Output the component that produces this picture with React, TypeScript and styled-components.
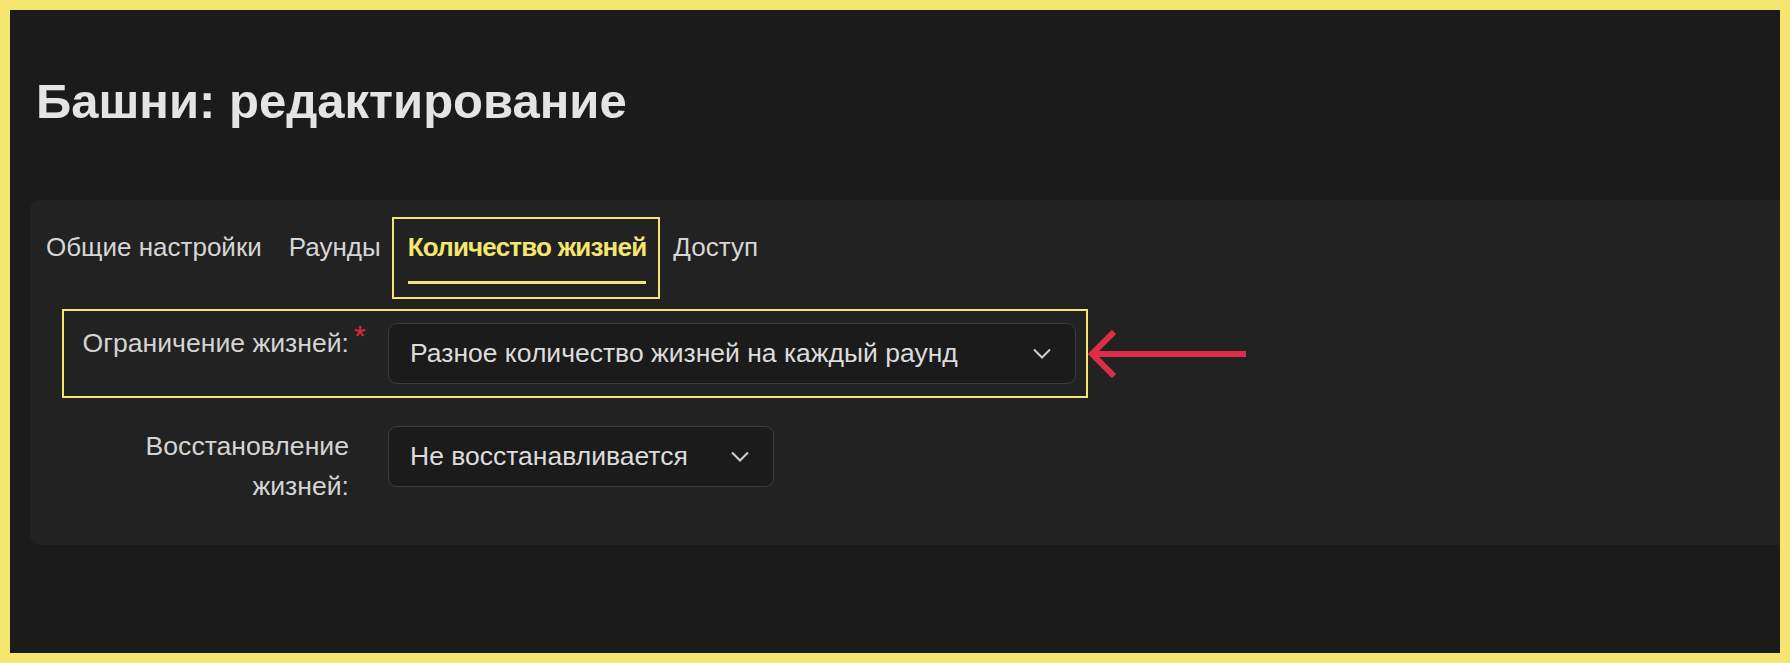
import React from "react";
import styled, { createGlobalStyle } from "styled-components";

const YELLOW = "#f4e66e";

const GlobalStyle = createGlobalStyle`
  * { box-sizing: border-box; }
  body {
    margin: 0;
    font-family: "Liberation Sans", Arial, sans-serif;
    background: #1b1b1b;
  }
`;

const Frame = styled.div`
  height: 100vh;
  border: 10px solid ${YELLOW};
  background: #1b1b1b;
  padding: 63px 0 0 20px;
  overflow: hidden;
`;

const Title = styled.h1`
  margin: 0 0 0 6px;
  font-size: 49px;
  line-height: 56px;
  font-weight: 700;
  color: #e4e4e4;
`;

const Card = styled.section`
  margin-top: 71px;
  background: #222222;
  border-radius: 9px 0 0 9px;
  padding: 29px 16px 25px 16px;
`;

const TabList = styled.div`
  display: flex;
  gap: 27px;
`;

const Tab = styled.div<{ $active?: boolean }>`
  position: relative;
  font-size: 26px;
  line-height: 36px;
  padding-bottom: 16px;
  color: ${({ $active }) => ($active ? YELLOW : "#d6d6d6")};
  font-weight: ${({ $active }) => ($active ? 700 : 400)};
  letter-spacing: ${({ $active }) => ($active ? "-0.8px" : "0")};
  border-bottom: 3px solid ${({ $active }) => ($active ? YELLOW : "transparent")};
  white-space: nowrap;
  cursor: pointer;

  ${({ $active }) =>
    $active &&
    `
    &::before {
      content: "";
      position: absolute;
      left: -16px;
      right: -14px;
      top: -12px;
      bottom: -18px;
      border: 2px solid ${YELLOW};
    }
  `}
`;

const Form = styled.div`
  display: flex;
  flex-direction: column;
  align-items: flex-start;
  gap: 14px;
  margin-top: 25px;
  padding-left: 16px;
`;

const Row = styled.div<{ $highlight?: boolean }>`
  position: relative;
  display: flex;
  align-items: flex-start;
  padding: 12px 10px 12px 0;
  border: 2px solid ${({ $highlight }) => ($highlight ? YELLOW : "transparent")};
`;

const Label = styled.div`
  position: relative;
  width: 285px;
  margin-right: 39px;
  text-align: right;
  font-size: 26.6px;
  line-height: 40px;
  color: #d4d4d4;
  white-space: nowrap;
`;

const Required = styled.span`
  position: absolute;
  left: calc(100% + 5px);
  top: -2px;
  font-size: 30px;
  line-height: 30px;
  color: #e0283c;
`;

const Select = styled.div<{ $width: number }>`
  width: ${({ $width }) => $width}px;
  height: 61px;
  display: flex;
  align-items: center;
  justify-content: space-between;
  padding: 0 24px 0 21px;
  background: #1b1b1b;
  border: 1px solid #3c3c3c;
  border-radius: 9px;
  font-size: 26.5px;
  color: #dcdcdc;
  white-space: nowrap;
`;

const Arrow = styled.svg`
  position: absolute;
  left: calc(100% + 2px);
  top: 50%;
  transform: translateY(-50%);
`;

const Chevron = () => (
  <svg width="18" height="11" viewBox="0 0 18 11" fill="none">
    <polyline points="1,1.5 9,9.5 17,1.5" stroke="#cfcfcf" strokeWidth="2" />
  </svg>
);

export default function App() {
  return (
    <>
      <GlobalStyle />
      <Frame>
        <Title>Башни: редактирование</Title>
        <Card>
          <TabList>
            <Tab>Общие настройки</Tab>
            <Tab>Раунды</Tab>
            <Tab $active>Количество жизней</Tab>
            <Tab>Доступ</Tab>
          </TabList>
          <Form>
            <Row $highlight>
              <Label>
                Ограничение жизней:
                <Required>*</Required>
              </Label>
              <Select $width={688}>
                Разное количество жизней на каждый раунд
                <Chevron />
              </Select>
              <Arrow width="160" height="48" viewBox="0 0 160 48" fill="none">
                <line x1="4" y1="24" x2="158" y2="24" stroke="#dc2f47" strokeWidth="6" />
                <polyline points="26,2 4,24 26,46" stroke="#dc2f47" strokeWidth="6" />
              </Arrow>
            </Row>
            <Row>
              <Label>
                Восстановление
                <br />
                жизней:
              </Label>
              <Select $width={386}>
                Не восстанавливается
                <Chevron />
              </Select>
            </Row>
          </Form>
        </Card>
      </Frame>
    </>
  );
}
